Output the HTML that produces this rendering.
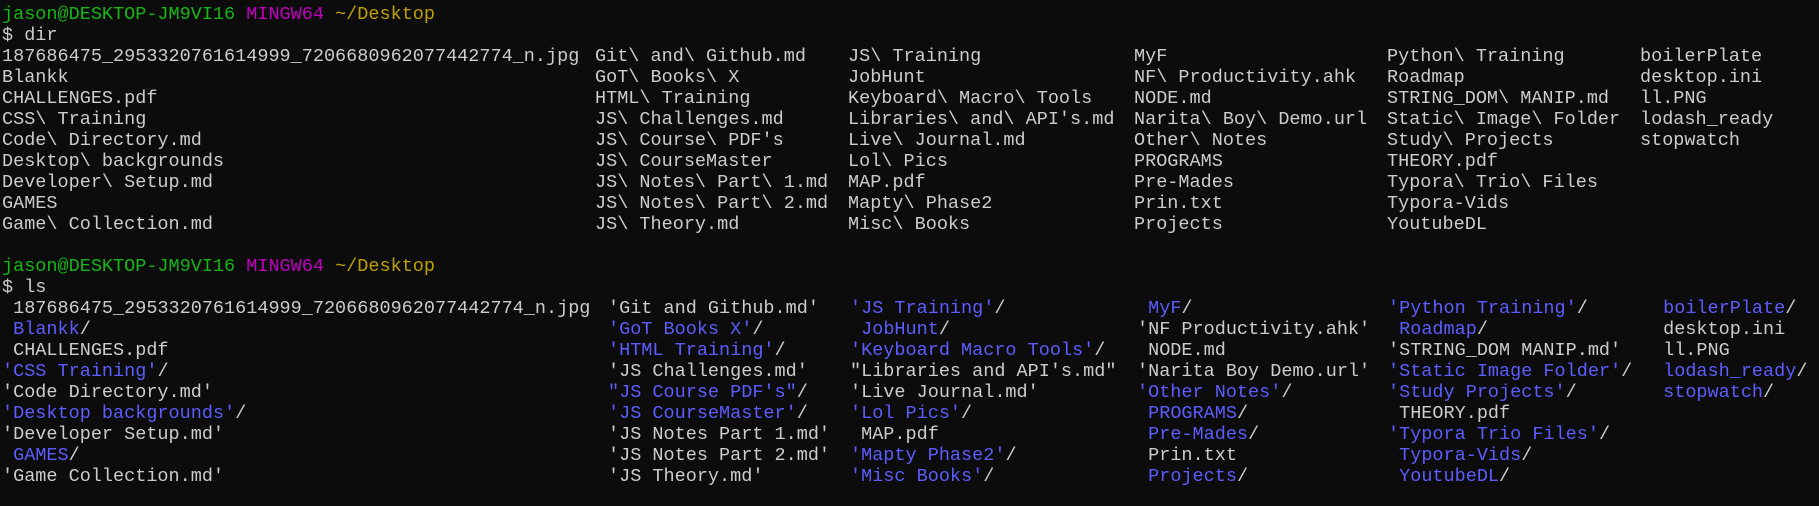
<!DOCTYPE html>
<html><head><meta charset="utf-8"><style>
html,body{margin:0;padding:0;background:#0c0c0c;}
body{width:1819px;height:506px;overflow:hidden;position:relative;font-family:"Liberation Mono",monospace;font-size:18.5px;color:#cccccc;}
.l{position:absolute;left:0;height:21px;line-height:21px;white-space:pre;width:1819px;}
.l span.c{position:absolute;top:0;white-space:pre;}
.g{color:#16b616}.m{color:#c000c0}.y{color:#c0a000}.b{color:#5c5cff}
.d1{left:2px}.d2{left:595px}.d3{left:848px}.d4{left:1134px}.d5{left:1387px}.d6{left:1640px}
.s1{left:2px}.s2{left:608px}.s3{left:850px}.s4{left:1137px}.s5{left:1388px}.s6{left:1652px}
</style></head><body>
<div class="l" style="top:4px"><span class="c d1"><span class="g">jason@DESKTOP-JM9VI16</span> <span class="m">MINGW64</span> <span class="y">~/Desktop</span></span></div>
<div class="l" style="top:25px"><span class="c d1">$ dir</span></div>
<div class="l" style="top:46px"><span class="c d1">187686475_2953320761614999_7206680962077442774_n.jpg</span><span class="c d2">Git\ and\ Github.md</span><span class="c d3">JS\ Training</span><span class="c d4">MyF</span><span class="c d5">Python\ Training</span><span class="c d6">boilerPlate</span></div>
<div class="l" style="top:67px"><span class="c d1">Blankk</span><span class="c d2">GoT\ Books\ X</span><span class="c d3">JobHunt</span><span class="c d4">NF\ Productivity.ahk</span><span class="c d5">Roadmap</span><span class="c d6">desktop.ini</span></div>
<div class="l" style="top:88px"><span class="c d1">CHALLENGES.pdf</span><span class="c d2">HTML\ Training</span><span class="c d3">Keyboard\ Macro\ Tools</span><span class="c d4">NODE.md</span><span class="c d5">STRING_DOM\ MANIP.md</span><span class="c d6">ll.PNG</span></div>
<div class="l" style="top:109px"><span class="c d1">CSS\ Training</span><span class="c d2">JS\ Challenges.md</span><span class="c d3">Libraries\ and\ API's.md</span><span class="c d4">Narita\ Boy\ Demo.url</span><span class="c d5">Static\ Image\ Folder</span><span class="c d6">lodash_ready</span></div>
<div class="l" style="top:130px"><span class="c d1">Code\ Directory.md</span><span class="c d2">JS\ Course\ PDF's</span><span class="c d3">Live\ Journal.md</span><span class="c d4">Other\ Notes</span><span class="c d5">Study\ Projects</span><span class="c d6">stopwatch</span></div>
<div class="l" style="top:151px"><span class="c d1">Desktop\ backgrounds</span><span class="c d2">JS\ CourseMaster</span><span class="c d3">Lol\ Pics</span><span class="c d4">PROGRAMS</span><span class="c d5">THEORY.pdf</span></div>
<div class="l" style="top:172px"><span class="c d1">Developer\ Setup.md</span><span class="c d2">JS\ Notes\ Part\ 1.md</span><span class="c d3">MAP.pdf</span><span class="c d4">Pre-Mades</span><span class="c d5">Typora\ Trio\ Files</span></div>
<div class="l" style="top:193px"><span class="c d1">GAMES</span><span class="c d2">JS\ Notes\ Part\ 2.md</span><span class="c d3">Mapty\ Phase2</span><span class="c d4">Prin.txt</span><span class="c d5">Typora-Vids</span></div>
<div class="l" style="top:214px"><span class="c d1">Game\ Collection.md</span><span class="c d2">JS\ Theory.md</span><span class="c d3">Misc\ Books</span><span class="c d4">Projects</span><span class="c d5">YoutubeDL</span></div>

<div class="l" style="top:256px"><span class="c d1"><span class="g">jason@DESKTOP-JM9VI16</span> <span class="m">MINGW64</span> <span class="y">~/Desktop</span></span></div>
<div class="l" style="top:277px"><span class="c d1">$ ls</span></div>
<div class="l" style="top:298px"><span class="c s1"> 187686475_2953320761614999_7206680962077442774_n.jpg</span><span class="c s2">'Git and Github.md'</span><span class="c s3"><span class="b">'JS Training'</span>/</span><span class="c s4"> <span class="b">MyF</span>/</span><span class="c s5"><span class="b">'Python Training'</span>/</span><span class="c s6"> <span class="b">boilerPlate</span>/</span></div>
<div class="l" style="top:319px"><span class="c s1"> <span class="b">Blankk</span>/</span><span class="c s2"><span class="b">'GoT Books X'</span>/</span><span class="c s3"> <span class="b">JobHunt</span>/</span><span class="c s4">'NF Productivity.ahk'</span><span class="c s5"> <span class="b">Roadmap</span>/</span><span class="c s6"> desktop.ini</span></div>
<div class="l" style="top:340px"><span class="c s1"> CHALLENGES.pdf</span><span class="c s2"><span class="b">'HTML Training'</span>/</span><span class="c s3"><span class="b">'Keyboard Macro Tools'</span>/</span><span class="c s4"> NODE.md</span><span class="c s5">'STRING_DOM MANIP.md'</span><span class="c s6"> ll.PNG</span></div>
<div class="l" style="top:361px"><span class="c s1"><span class="b">'CSS Training'</span>/</span><span class="c s2">'JS Challenges.md'</span><span class="c s3">"Libraries and API's.md"</span><span class="c s4">'Narita Boy Demo.url'</span><span class="c s5"><span class="b">'Static Image Folder'</span>/</span><span class="c s6"> <span class="b">lodash_ready</span>/</span></div>
<div class="l" style="top:382px"><span class="c s1">'Code Directory.md'</span><span class="c s2"><span class="b">"JS Course PDF's"</span>/</span><span class="c s3">'Live Journal.md'</span><span class="c s4"><span class="b">'Other Notes'</span>/</span><span class="c s5"><span class="b">'Study Projects'</span>/</span><span class="c s6"> <span class="b">stopwatch</span>/</span></div>
<div class="l" style="top:403px"><span class="c s1"><span class="b">'Desktop backgrounds'</span>/</span><span class="c s2"><span class="b">'JS CourseMaster'</span>/</span><span class="c s3"><span class="b">'Lol Pics'</span>/</span><span class="c s4"> <span class="b">PROGRAMS</span>/</span><span class="c s5"> THEORY.pdf</span></div>
<div class="l" style="top:424px"><span class="c s1">'Developer Setup.md'</span><span class="c s2">'JS Notes Part 1.md'</span><span class="c s3"> MAP.pdf</span><span class="c s4"> <span class="b">Pre-Mades</span>/</span><span class="c s5"><span class="b">'Typora Trio Files'</span>/</span></div>
<div class="l" style="top:445px"><span class="c s1"> <span class="b">GAMES</span>/</span><span class="c s2">'JS Notes Part 2.md'</span><span class="c s3"><span class="b">'Mapty Phase2'</span>/</span><span class="c s4"> Prin.txt</span><span class="c s5"> <span class="b">Typora-Vids</span>/</span></div>
<div class="l" style="top:466px"><span class="c s1">'Game Collection.md'</span><span class="c s2">'JS Theory.md'</span><span class="c s3"><span class="b">'Misc Books'</span>/</span><span class="c s4"> <span class="b">Projects</span>/</span><span class="c s5"> <span class="b">YoutubeDL</span>/</span></div>
</body></html>
